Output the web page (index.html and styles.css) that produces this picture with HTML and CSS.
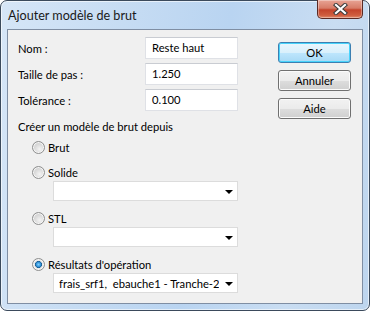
FILE: index.html
```html
<!DOCTYPE html>
<html lang="fr">
<head>
    <meta charset="UTF-8">
    <title>Ajouter modèle de brut</title>
    <link rel="stylesheet" href="styles.css">
</head>
<body>
    <div class="window">
        <div class="title-bar">
            <span class="title">Ajouter modèle de brut</span>
            <div class="close-btn">
                <svg width="15" height="12" viewBox="0 0 15 12">
                    <path d="M3 2 L12 10 M12 2 L3 10" stroke="#3b3b3b" stroke-width="4.2" stroke-linecap="square"/>
                    <path d="M3 2 L12 10 M12 2 L3 10" stroke="#ffffff" stroke-width="2.2" stroke-linecap="square"/>
                </svg>
            </div>
        </div>

        <div class="client">
            <div class="form-col">
                <div class="field-row">
                    <label>Nom :</label>
                    <div class="textbox">Reste haut</div>
                </div>
                <div class="field-row">
                    <label>Taille de pas :</label>
                    <div class="textbox">1.250</div>
                </div>
                <div class="field-row">
                    <label>Tolérance :</label>
                    <div class="textbox">0.100</div>
                </div>

                <div class="section-label">Créer un modèle de brut depuis</div>

                <div class="radio-row first">
                    <span class="radio"></span>
                    <span>Brut</span>
                </div>
                <div class="radio-row">
                    <span class="radio"></span>
                    <span>Solide</span>
                </div>
                <div class="combo"><span class="combo-text"></span><span class="arrow"></span></div>

                <div class="radio-row">
                    <span class="radio"></span>
                    <span>STL</span>
                </div>
                <div class="combo"><span class="combo-text"></span><span class="arrow"></span></div>

                <div class="radio-row">
                    <span class="radio checked"></span>
                    <span>Résultats d'opération</span>
                </div>
                <div class="combo"><span class="combo-text">frais_srf1,  ebauche1 - Tranche-2</span><span class="arrow"></span></div>
            </div>

            <div class="button-col">
                <div class="btn default">OK</div>
                <div class="btn">Annuler</div>
                <div class="btn">Aide</div>
            </div>
        </div>
    </div>
</body>
</html>
```

FILE: styles.css
```css
* {
    margin: 0;
    padding: 0;
    box-sizing: border-box;
}

body {
    width: 370px;
    height: 311px;
    font-family: Lato, "Liberation Sans", sans-serif;
    font-size: 11.2px;
    color: #000;
    background: #ffffff;
}

.window {
    width: 370px;
    height: 311px;
    border: 1px solid #3b4a5c;
    border-radius: 7px;
    padding: 0 6px 6px 6px;
    display: flex;
    flex-direction: column;
    background: linear-gradient(100deg, #d6e6f7 0%, #c6dcf3 30%, #b9d4f1 55%, #c9ddf2 80%, #bdd5ee 100%);
    box-shadow: inset 0 0 0 1px rgba(255, 255, 255, 0.6);
}

/* title bar */
.title-bar {
    height: 28px;
    display: flex;
    justify-content: space-between;
    align-items: flex-start;
}

.title {
    padding-left: 1px;
    line-height: 30px;
    font-size: 12.6px;
    color: #1a1a1a;
}

.close-btn {
    width: 46px;
    height: 19px;
    margin-top: -1px;
    border: 1px solid #5a2a24;
    border-top: none;
    border-radius: 0 0 5px 5px;
    background: linear-gradient(#e8a495 0%, #d77c68 45%, #c4442b 55%, #cf5d3f 85%, #e08c6c 100%);
    box-shadow: inset 0 0 0 1px rgba(255, 255, 255, 0.35);
    display: flex;
    justify-content: center;
    align-items: center;
}

/* client area */
.client {
    flex: 1;
    background: #f0f0f0;
    border: 1px solid #7f8ea3;
    display: flex;
    padding: 7px 11px 0 10px;
}

.form-col {
    width: 220px;
    display: flex;
    flex-direction: column;
}

.field-row {
    height: 22px;
    margin-bottom: 4px;
    display: flex;
    justify-content: space-between;
    align-items: center;
}

.textbox {
    width: 93px;
    height: 22px;
    background: #fff;
    border: 1px solid #dfe1e6;
    border-top-color: #c9ccd2;
    padding-left: 6px;
    line-height: 20px;
}

.section-label {
    margin-top: 4px;
    height: 16px;
    line-height: 16px;
}

.radio-row {
    height: 16px;
    margin-top: 9px;
    padding-left: 14px;
    display: flex;
    align-items: center;
    gap: 3px;
}

.radio-row.first {
    margin-top: 4px;
}

.radio {
    width: 13px;
    height: 13px;
    border-radius: 50%;
    border: 1px solid #8e8f8f;
    background: radial-gradient(circle at 60% 65%, #f4f4f4 0%, #dcdcdc 45%, #c4c4c4 100%);
    box-shadow: inset 0 0 0 1px #f6f6f6;
}

.radio.checked {
    background: radial-gradient(circle at 50% 50%, #7fd0ff 0%, #2f8fd4 30%, #1a5a8e 42%, #e8e8e8 48%, #d6d6d6 100%);
}

.combo {
    width: 185px;
    height: 20px;
    margin-top: 1px;
    margin-left: 35px;
    background: #fff;
    border: 1px solid #dcdcdc;
    display: flex;
    align-items: center;
    padding-left: 5px;
}

.combo-text {
    flex: 1;
    white-space: pre;
    overflow: hidden;
}

.arrow {
    width: 0;
    height: 0;
    margin: 1px 4px 0 6px;
    border-left: 4px solid transparent;
    border-right: 4px solid transparent;
    border-top: 4px solid #000;
}

/* buttons */
.button-col {
    margin-left: 40px;
    padding-top: 5px;
    display: flex;
    flex-direction: column;
    gap: 7px;
}

.btn {
    width: 73px;
    height: 21px;
    border: 1px solid #707070;
    border-radius: 3px;
    background: linear-gradient(#f2f2f2 0%, #ebebeb 50%, #dddddd 51%, #cfcfcf 100%);
    box-shadow: inset 0 0 0 1px #fbfbfb;
    text-align: center;
    line-height: 19px;
}

.btn.default {
    border-color: #3c7fb1;
    background: linear-gradient(#eaf6fd 0%, #d9f0fc 50%, #bee6fd 51%, #a7d9f5 100%);
    box-shadow: inset 0 0 0 1px #48d3fb;
}
```
